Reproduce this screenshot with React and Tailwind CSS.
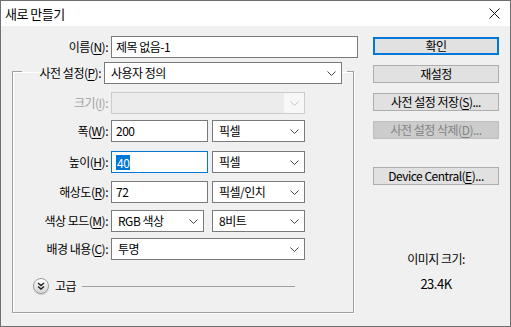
import React from 'react';

const Chevron = ({ disabled }) => (
  <svg width="9" height="5" viewBox="0 0 9 5" className="shrink-0">
    <polyline
      points="0.5,0.5 4.5,4.5 8.5,0.5"
      fill="none"
      stroke={disabled ? '#c4c4c4' : '#444'}
      strokeWidth="1"
    />
  </svg>
);

const U = ({ children }) => <span className="underline underline-offset-2">{children}</span>;

const TextInput = ({ value, width, focused }) => (
  <div
    className={`h-[22px] ${width} bg-white border ${
      focused ? 'border-[#0078d7]' : 'border-[#7a7a7a]'
    } flex items-center pl-[4px]`}
  >
    {focused ? <span className="bg-[#0078d7] text-white px-px leading-[15px]">{value}</span> : value}
  </div>
);

const Select = ({ value, width, disabled, className = '' }) => (
  <div
    className={`h-[22px] ${width} border flex items-center ${className} ${
      disabled ? 'bg-[#ececec] border-[#cccccc]' : 'bg-white border-[#7a7a7a]'
    }`}
  >
    <span className="flex-1 pl-[6px] whitespace-nowrap leading-[16px]">{value}</span>
    <span className={`w-[20px] h-full flex items-center justify-center ${disabled ? 'bg-[#f7f7f7]' : ''}`}>
      <Chevron disabled={disabled} />
    </span>
  </div>
);

const Button = ({ children, primary, disabled, className = '' }) => (
  <div
    className={`h-[18px] w-[126px] flex items-center justify-center whitespace-nowrap ${className} ${
      primary
        ? 'border-2 border-[#0078d7] bg-[#e1e1e1]'
        : disabled
        ? 'border border-[#bfbfbf] bg-[#cccccc] text-[#838383]'
        : 'border border-[#adadad] bg-[#e1e1e1]'
    }`}
  >
    {children}
  </div>
);

const Row = ({ label, disabled, className = '', children }) => (
  <div className={`flex items-center ${className}`}>
    <div className={`w-[98px] shrink-0 text-right pr-[3px] ${disabled ? 'text-[#a0a0a0]' : ''}`}>{label}</div>
    {children}
  </div>
);

export default function App() {
  return (
    <div className="w-[511px] h-[327px] border border-[#707070] flex flex-col text-[12px] text-black font-['Noto_Sans_CJK_KR',sans-serif] tracking-[-0.5px] leading-[16px]">
      {/* title bar */}
      <div className="h-[25px] bg-white flex items-center justify-between pl-[4px] pr-[10px]">
        <span className="text-[13px]">새로 만들기</span>
        <svg width="11" height="11" viewBox="0 0 11 11">
          <path d="M0.5 0.5 L10.5 10.5 M10.5 0.5 L0.5 10.5" stroke="#111" strokeWidth="1" />
        </svg>
      </div>

      <div className="flex-1 bg-[#f0f0f0] flex">
        {/* left panel */}
        <div className="w-[360px] pt-[10px] flex flex-col">
          <div className="flex items-center">
            <div className="w-[110px] text-right pr-[3px]">
              이름(<U>N</U>):
            </div>
            <TextInput value="제목 없음-1" width="w-[247px]" />
          </div>

          <fieldset className="ml-[11px] w-[342px] border border-[#a0a0a0] shadow-[inset_1px_1px_0_#fff,1px_1px_0_#fff] pb-[18px]">
            <legend className="ml-[9px] pr-[5px] pt-[4px] flex items-center">
              <div className="w-[82px] text-right pr-[3px]">
                사전 설정(<U>P</U>):
              </div>
              <Select value="사용자 정의" width="w-[238px]" />
            </legend>

            <Row label={<>크기(<U>I</U>):</>} disabled className="mt-[8px]">
              <Select value="" width="w-[194px]" disabled />
            </Row>
            <Row label={<>폭(<U>W</U>):</>} className="mt-[6px]">
              <TextInput value="200" width="w-[97px]" />
              <Select value="픽셀" width="w-[93px]" className="ml-[4px]" />
            </Row>
            <Row label={<>높이(<U>H</U>):</>} className="mt-[9px]">
              <TextInput value="40" width="w-[97px]" focused />
              <Select value="픽셀" width="w-[93px]" className="ml-[4px]" />
            </Row>
            <Row label={<>해상도(<U>R</U>):</>} className="mt-[8px]">
              <TextInput value="72" width="w-[97px]" />
              <Select value="픽셀/인치" width="w-[93px]" className="ml-[4px]" />
            </Row>
            <Row label={<>색상 모드(<U>M</U>):</>} className="mt-[7px]">
              <Select value="RGB 색상" width="w-[93px]" />
              <Select value="8비트" width="w-[93px]" className="ml-[8px]" />
            </Row>
            <Row label={<>배경 내용(<U>C</U>):</>} className="mt-[6px]">
              <Select value="투명" width="w-[194px]" />
            </Row>

            <div className="mt-[18px] h-[16px] flex items-center pl-[20px] pr-[58px]">
              <div className="w-[16px] h-[16px] rounded-full border border-[#9a9a9a] bg-gradient-to-b from-white to-[#d6d6d6] flex items-center justify-center shadow-[0_1px_1px_rgba(0,0,0,0.15)]">
                <svg width="8" height="8" viewBox="0 0 8 8">
                  <path d="M1 1 L4 3.5 L7 1 M1 4.5 L4 7 L7 4.5" fill="none" stroke="#222" strokeWidth="1.4" />
                </svg>
              </div>
              <span className="ml-[6px]">고급</span>
              <div className="flex-1 ml-[6px] h-px bg-[#a0a0a0]" />
            </div>
          </fieldset>
        </div>

        {/* right column */}
        <div className="ml-[12px] pt-[11px] flex flex-col items-center w-[126px]">
          <Button primary>확인</Button>
          <Button className="mt-[10px]">재설정</Button>
          <Button className="mt-[10px]">
            사전 설정 저장(<U>S</U>)...
          </Button>
          <Button disabled className="mt-[10px]">
            사전 설정 삭제(<U>D</U>)...
          </Button>
          <Button className="mt-[28px]">
            Device Central(<U>E</U>)...
          </Button>
          <div className="mt-[66px] h-[16px] flex items-center">이미지 크기:</div>
          <div className="mt-[9px] h-[16px] flex items-center text-[13px]">23.4K</div>
        </div>
      </div>
    </div>
  );
}
